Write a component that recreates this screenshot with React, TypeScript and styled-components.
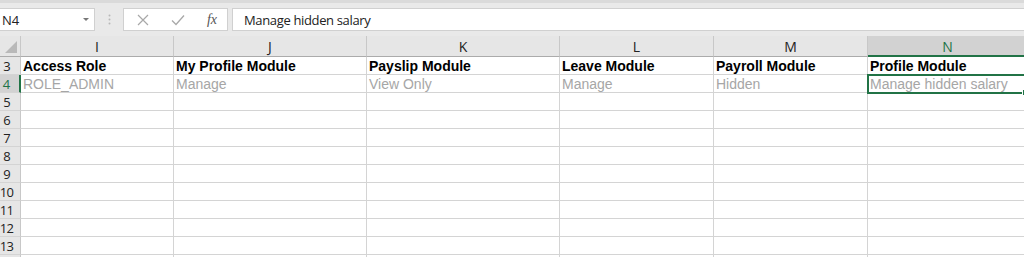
import { Fragment } from 'react';
import styled, { createGlobalStyle, css } from 'styled-components';

const GlobalStyle = createGlobalStyle`
  html, body {
    margin: 0;
    padding: 0;
    background: #ffffff;
    overflow: hidden;
  }
`;

const columns = ['I', 'J', 'K', 'L', 'M', 'N'];
const widths = [153, 193, 193, 154, 154, 160];

const headerRow = ['Access Role', 'My Profile Module', 'Payslip Module', 'Leave Module', 'Payroll Module', 'Profile Module'];
const valueRow = ['ROLE_ADMIN', 'Manage', 'View Only', 'Manage', 'Hidden', 'Manage hidden salary'];
const emptyRows = ['5', '6', '7', '8', '9', '10', '11', '12', '13', ''];

const Sheet = styled.div`
  width: 1024px;
  height: 257px;
  overflow: hidden;
  font-family: 'Liberation Sans', Arial, sans-serif;
`;

const Toolbar = styled.div`
  height: 36px;
  box-sizing: border-box;
  background: #e9e9e9;
  border-top: 3px solid #dadada;
  display: flex;
  align-items: flex-start;
  padding-top: 5px;
`;

const NameBox = styled.div`
  width: 95px;
  height: 23px;
  box-sizing: border-box;
  background: #ffffff;
  border: 1px solid #d0d0d0;
  border-left: none;
  display: flex;
  align-items: center;
  justify-content: space-between;
  padding: 0 5px 0 2px;
  font-family: 'Open Sans', 'Noto Sans', sans-serif;
  font-size: 13px;
  color: #222;
`;

const Caret = styled.span`
  width: 0;
  height: 0;
  border-left: 3px solid transparent;
  border-right: 3px solid transparent;
  border-top: 3px solid #777;
`;

const Grip = styled.div`
  width: 28px;
  height: 23px;
  display: flex;
  align-items: center;
  justify-content: center;
`;

const FxBox = styled.div`
  width: 105px;
  height: 23px;
  box-sizing: border-box;
  background: #ffffff;
  border: 1px solid #d0d0d0;
  display: flex;
  align-items: center;
  justify-content: space-between;
  padding: 0 10px 0 13px;
`;

const Fx = styled.span`
  font-family: 'Liberation Serif', 'Times New Roman', serif;
  font-style: italic;
  font-size: 14px;
  color: #555;
`;

const FormulaInput = styled.div`
  flex: 1;
  height: 23px;
  box-sizing: border-box;
  margin-left: 4px;
  background: #ffffff;
  border: 1px solid #d0d0d0;
  border-right: none;
  display: flex;
  align-items: center;
  padding-left: 11px;
  font-family: 'Open Sans', 'Noto Sans', sans-serif;
  font-size: 13px;
  letter-spacing: -0.35px;
  color: #222;
`;

const Grid = styled.div`
  display: grid;
  grid-template-columns: 21px ${widths.map((w) => `${w}px`).join(' ')};
  grid-template-rows: 21px;
  grid-auto-rows: 18px;
`;

const Corner = styled.div`
  box-sizing: border-box;
  background: #e6e6e6;
  border-right: 1px solid #c8c8c8;
  border-bottom: 1px solid #ababab;
  position: relative;
  overflow: hidden;

  &::after {
    content: '';
    position: absolute;
    right: 3px;
    bottom: 3px;
    width: 0;
    height: 0;
    border-left: 12px solid transparent;
    border-bottom: 12px solid #b9b9b9;
  }
`;

const ColHeader = styled.div<{ $active?: boolean }>`
  box-sizing: border-box;
  background: #e6e6e6;
  border-right: 1px solid #c8c8c8;
  border-bottom: 1px solid #ababab;
  display: flex;
  align-items: center;
  justify-content: center;
  padding-top: 1px;
  font-family: 'Open Sans', 'Noto Sans', sans-serif;
  font-size: 14px;
  color: #222;

  ${({ $active }) =>
    $active &&
    css`
      background: #d2d2d2;
      color: #217346;
      border-bottom: 2px solid #217346;
    `}
`;

const RowHeader = styled.div<{ $active?: boolean }>`
  box-sizing: border-box;
  background: #e6e6e6;
  border-right: 1px solid #c8c8c8;
  border-bottom: 1px solid #d4d4d4;
  display: flex;
  align-items: center;
  justify-content: center;
  padding: 1px 7px 0 0;
  font-family: 'Open Sans', 'Noto Sans', sans-serif;
  font-size: 13px;
  letter-spacing: -0.8px;
  white-space: nowrap;
  color: #222;

  ${({ $active }) =>
    $active &&
    css`
      background: #d2d2d2;
      color: #217346;
      border-right: 2px solid #217346;
    `}
`;

const Cell = styled.div<{ $bold?: boolean; $muted?: boolean; $selected?: boolean }>`
  box-sizing: border-box;
  border-right: 1px solid #d4d4d4;
  border-bottom: 1px solid #d4d4d4;
  display: flex;
  align-items: center;
  padding: 1px 0 0 2px;
  font-size: 14px;
  white-space: nowrap;
  color: ${({ $muted }) => ($muted ? '#a6a6a6' : '#000000')};
  font-weight: ${({ $bold }) => ($bold ? 700 : 400)};

  ${({ $selected }) =>
    $selected &&
    css`
      position: relative;
      outline: 2px solid #217346;
      outline-offset: -1px;
      border-color: transparent;
      margin-right: 2px;
    `}
`;

const Handle = styled.span`
  position: absolute;
  right: -4px;
  bottom: -4px;
  width: 5px;
  height: 5px;
  background: #217346;
  border: 1px solid #ffffff;
`;

const App = () => {
  return (
    <>
      <GlobalStyle />
      <Sheet>
        <Toolbar>
          <NameBox>
            N4
            <Caret />
          </NameBox>
          <Grip>
            <svg width="3" height="11" viewBox="0 0 3 11">
              <circle cx="1.5" cy="1.5" r="1" fill="#b8b8b8" />
              <circle cx="1.5" cy="5.5" r="1" fill="#b8b8b8" />
              <circle cx="1.5" cy="9.5" r="1" fill="#b8b8b8" />
            </svg>
          </Grip>
          <FxBox>
            <svg width="12" height="12" viewBox="0 0 12 12">
              <path d="M1 1 L11 11 M11 1 L1 11" stroke="#a8a8a8" strokeWidth="1.2" fill="none" />
            </svg>
            <svg width="14" height="12" viewBox="0 0 14 12">
              <path d="M1 6.5 L5 10.5 L13 1.5" stroke="#a8a8a8" strokeWidth="1.3" fill="none" />
            </svg>
            <Fx>fx</Fx>
          </FxBox>
          <FormulaInput>Manage hidden salary</FormulaInput>
        </Toolbar>

        <Grid>
          <Corner />
          {columns.map((c) => (
            <ColHeader key={c} $active={c === 'N'}>
              {c}
            </ColHeader>
          ))}

          <RowHeader>3</RowHeader>
          {headerRow.map((t) => (
            <Cell key={t} $bold>
              {t}
            </Cell>
          ))}

          <RowHeader $active>4</RowHeader>
          {valueRow.map((t, i) => (
            <Cell key={t + i} $muted $selected={i === 5}>
              {t}
              {i === 5 && <Handle />}
            </Cell>
          ))}

          {emptyRows.map((r, idx) => (
            <Fragment key={`row${idx}`}>
              <RowHeader>{r}</RowHeader>
              {columns.map((c) => (
                <Cell key={`${c}${idx}`} />
              ))}
            </Fragment>
          ))}
        </Grid>
      </Sheet>
    </>
  );
};

export default App;
